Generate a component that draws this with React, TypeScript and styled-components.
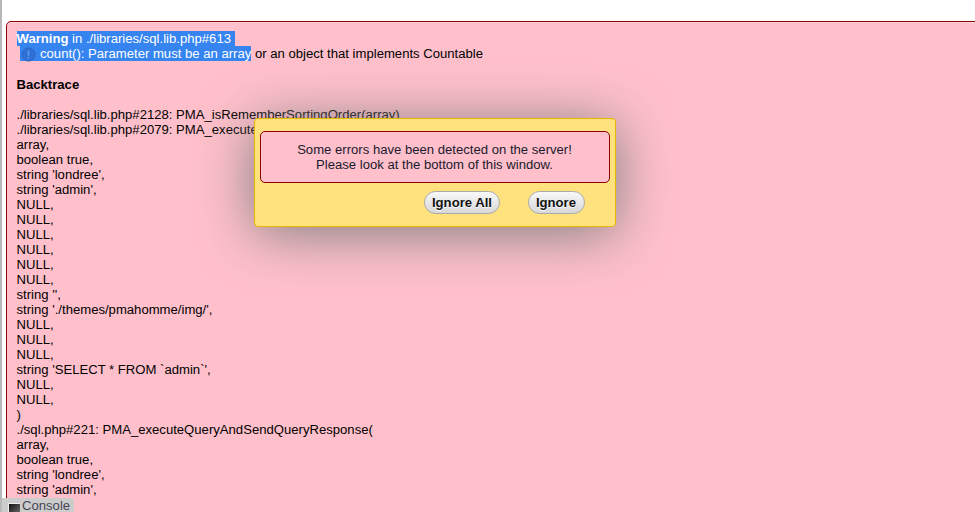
import React from "react";
import styled, { createGlobalStyle } from "styled-components";

const lines: string[] = [
  "array,",
  "boolean true,",
  "string 'londree',",
  "string 'admin',",
  "NULL,",
  "NULL,",
  "NULL,",
  "NULL,",
  "NULL,",
  "NULL,",
  "string '',",
  "string './themes/pmahomme/img/',",
  "NULL,",
  "NULL,",
  "NULL,",
  "string 'SELECT * FROM `admin`',",
  "NULL,",
  "NULL,",
  ")",
  "./sql.php#221: PMA_executeQueryAndSendQueryResponse(",
  "array,",
  "boolean true,",
  "string 'londree',",
  "string 'admin',",
];

const App = () => {
  return (
    <Page>
      <GlobalStyle />
      <LeftEdge />
      <ErrorBox>
        <Line>
          <Selected>
            <strong>Warning</strong> in ./libraries/sql.lib.php#613&nbsp;
          </Selected>
        </Line>
        <Line>
          <Selected $indent>
            <InfoIcon viewBox="0 0 16 16">
              <circle cx="8" cy="8" r="7" fill="#2f70d6" stroke="#2a66c0" />
              <rect x="7" y="3.5" width="2" height="6" rx="1" fill="#5a95e8" />
              <rect x="7" y="10.5" width="2" height="2" rx="1" fill="#5a95e8" />
            </InfoIcon>
            count(): Parameter must be an array
          </Selected>{" "}
          or an object that implements Countable
        </Line>
        <Gap />
        <Line>
          <strong>Backtrace</strong>
        </Line>
        <Line>&nbsp;</Line>
        <Line>./libraries/sql.lib.php#2128: PMA_isRememberSortingOrder(array)</Line>
        <Line>./libraries/sql.lib.php#2079: PMA_executeQueryAndGetQueryResponse(</Line>
        {lines.map((text, i) => (
          <Line key={i}>{text}</Line>
        ))}
      </ErrorBox>

      <Modal>
        <ModalMessage>
          Some errors have been detected on the server!
          <br />
          Please look at the bottom of this window.
        </ModalMessage>
        <ModalButtons>
          <PillButton>Ignore All</PillButton>
          <PillButton>Ignore</PillButton>
        </ModalButtons>
      </Modal>

      <ConsoleTab>
        <ConsoleIcon />
        Console
      </ConsoleTab>
    </Page>
  );
};

export default App;

const GlobalStyle = createGlobalStyle`
  html, body {
    margin: 0;
    padding: 0;
    height: 100%;
    overflow: hidden;
    background: #fff;
  }
`;

const Page = styled.div`
  position: relative;
  width: 975px;
  height: 512px;
  overflow: hidden;
  padding: 21px 0 0 6px;
  box-sizing: border-box;
  font-family: "Liberation Sans", Arial, sans-serif;
  font-size: 13.12px;
  color: #000;
`;

const LeftEdge = styled.div`
  position: absolute;
  left: 0;
  top: 0;
  bottom: 0;
  width: 2px;
  background: #b8b8b8;
`;

const ErrorBox = styled.div`
  width: 1000px;
  box-sizing: border-box;
  padding: 9px 10px 40px 9.5px;
  background: #ffc0cb;
  border: 1px solid #8b0000;
  border-radius: 5px;
  box-shadow: inset 0 1px 0 #ffd6de;
`;

const Line = styled.div`
  height: 15px;
  line-height: 15px;
  white-space: pre-wrap;
`;

const Gap = styled.div`
  height: 16px;
`;

const Selected = styled.span<{ $indent?: boolean }>`
  display: inline-block;
  height: 15px;
  margin-left: ${({ $indent }) => ($indent ? "3.5px" : "0")};
  padding-left: ${({ $indent }) => ($indent ? "1px" : "0")};
  background: #3584f0;
  color: #fff;
`;

const InfoIcon = styled.svg`
  width: 15px;
  height: 15px;
  margin-right: 4px;
  vertical-align: -4px;
`;

const Modal = styled.div`
  position: absolute;
  left: 254px;
  top: 118px;
  width: 362px;
  height: 109px;
  box-sizing: border-box;
  padding: 12px 5px 0;
  background: #ffe27d;
  border: 1px solid #e6b800;
  border-radius: 4px;
  box-shadow: 0 6px 55px #7e7e7e;
`;

const ModalMessage = styled.div`
  box-sizing: border-box;
  height: 52px;
  padding: 10px 1px 10px 0;
  text-align: center;
  line-height: 15px;
  color: #1a1a2e;
  background: #ffc0cb;
  border: 1px solid #8b0000;
  border-radius: 5px;
`;

const ModalButtons = styled.div`
  display: flex;
  justify-content: flex-end;
  gap: 28px;
  padding: 8px 25.5px 0 0;
`;

const PillButton = styled.button`
  height: 23px;
  padding: 0 7.5px 1px 6.5px;
  font-family: "Liberation Sans", Arial, sans-serif;
  font-size: 13.12px;
  font-weight: bold;
  color: #111;
  text-shadow: 0 1px 0 #fff;
  background: linear-gradient(#f8f8f8, #d8d8d8);
  border: 1px solid #aaa;
  border-radius: 12px;
`;

const ConsoleTab = styled.div`
  position: absolute;
  left: 2px;
  bottom: 0;
  width: 72px;
  height: 14px;
  box-sizing: border-box;
  display: flex;
  align-items: flex-end;
  gap: 2px;
  padding-left: 6px;
  line-height: 13px;
  color: #445;
  background: #ccc;
  border-radius: 0 3px 0 0;
`;

const ConsoleIcon = styled.span`
  width: 12px;
  height: 9px;
  background: linear-gradient(135deg, #111, #666);
  border-left: 1px solid #eee;
  border-top: 1px solid #eee;
  box-sizing: border-box;
`;
